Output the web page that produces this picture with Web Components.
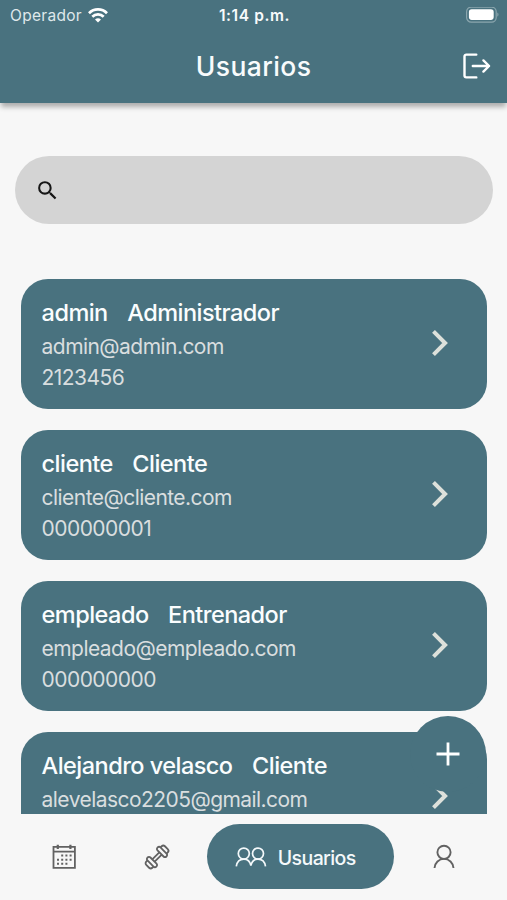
<!DOCTYPE html>
<html lang="es">
<head>
<meta charset="UTF-8">
<meta name="viewport" content="width=device-width, initial-scale=1.0">
<title>Usuarios</title>
<style>
  body {
    margin: 0;
    font-family: Inter, "Liberation Sans", sans-serif;
    background: #f7f7f7;
  }
</style>
</head>
<body>
<app-screen>
  <status-bar slot="top" operator="Operador" time="1:14 p.m."></status-bar>
  <app-header slot="top">Usuarios</app-header>
  <search-box></search-box>
  <user-list>
    <user-card name="admin" role-name="Administrador" email="admin@admin.com" phone="2123456"></user-card>
    <user-card name="cliente" role-name="Cliente" email="cliente@cliente.com" phone="000000001"></user-card>
    <user-card name="empleado" role-name="Entrenador" email="empleado@empleado.com" phone="000000000"></user-card>
    <user-card name="Alejandro velasco" role-name="Cliente" email="alevelasco2205@gmail.com"></user-card>
  </user-list>
  <add-button slot="floating"></add-button>
  <tab-bar slot="bottom"></tab-bar>
</app-screen>

<script>
class AppScreen extends HTMLElement {
  constructor() {
    super();
    this.attachShadow({ mode: "open" });
  }

  connectedCallback() {
    this.shadowRoot.innerHTML = `
      <style>
        :host {
            --teal: #49727f;
            display: flex;
            flex-direction: column;
            height: 900px;
            overflow: hidden;
        }
        /* la sombra de la cabecera queda por encima de la lista */
        header {
            flex: none;
            height: 103px;
            background: var(--teal);
            color: #f8fbfc;
            box-shadow: 0 5px 5px -1px rgba(0, 0, 0, 0.3);
            position: relative;
            z-index: 1;
        }
        main {
            flex: 1;
            min-height: 0;
            overflow: hidden;
            position: relative;
        }
        /* boton flotante sobre la lista */
        .floating {
            position: absolute;
            right: 21px;
            bottom: 21.5px;
        }
      </style>
      <header><slot name="top"></slot></header>
      <main>
        <slot></slot>
        <div class="floating"><slot name="floating"></slot></div>
      </main>
      <slot name="bottom"></slot>
    `;
  }
}
customElements.define("app-screen", AppScreen);

class StatusBar extends HTMLElement {
  constructor() {
    super();
    this.attachShadow({ mode: "open" });
  }

  connectedCallback() {
    this.shadowRoot.innerHTML = `
      <style>
        :host {
            display: grid;
            grid-template-columns: 1fr auto 1fr;
            align-items: center;
            height: 30px;
            padding: 0 8px 0 10px;
            font-size: 15.5px;
        }
        .left {
            display: flex;
            align-items: center;
            gap: 6px;
            color: #dfe8eb;
            letter-spacing: 0.3px;
        }
        .time {
            font-weight: 600;
            font-size: 15.5px;
            letter-spacing: 0.6px;
        }
        .battery {
            justify-self: end;
        }
        svg {
            display: block;
        }
      </style>
      <div class="left">
        <span>${this.getAttribute("operator")}</span>
        <svg width="20" height="15" viewBox="0 0 20 15" fill="none" stroke="#fff" stroke-width="2.7">
          <path d="M1 5.2a12.7 12.7 0 0 1 18 0"/>
          <path d="M4.3 8.7a8 8 0 0 1 11.4 0"/>
          <path d="M10 14.6L7 11.6a4.3 4.3 0 0 1 6 0z" fill="#fff" stroke="none"/>
        </svg>
      </div>
      <div class="time">${this.getAttribute("time")}</div>
      <svg class="battery" width="33" height="17" viewBox="0 0 33 17">
        <rect x="0.6" y="0.1" width="29.6" height="15" rx="4.6" fill="none" stroke="#8ba6ae" stroke-width="1.2"/>
        <rect x="2.9" y="2.3" width="24.8" height="10.6" rx="2.8" fill="#fff"/>
        <path d="M31.3 5.5c1.6.7 1.6 3.5 0 4.2z" fill="#8ba6ae"/>
      </svg>
    `;
  }
}
customElements.define("status-bar", StatusBar);

class AppHeader extends HTMLElement {
  constructor() {
    super();
    this.attachShadow({ mode: "open" });
  }

  connectedCallback() {
    this.shadowRoot.innerHTML = `
      <style>
        :host {
            display: grid;
            grid-template-columns: 1fr auto 1fr;
            align-items: center;
            height: 72px;
            padding: 0 15px;
        }
        h1 {
            grid-column: 2;
            margin: 0;
            padding-bottom: 1px;
            font-size: 26.5px;
            line-height: 32px;
            font-weight: 500;
            letter-spacing: 0.4px;
        }
        svg {
            justify-self: end;
        }
      </style>
      <h1><slot></slot></h1>
      <svg width="30" height="28" viewBox="0 0 30 28" fill="none" stroke="#fff" stroke-width="2.4" stroke-linecap="round" stroke-linejoin="round">
        <path d="M14.3 2.6H4.3a1.8 1.8 0 0 0-1.8 1.8v19.2a1.8 1.8 0 0 0 1.8 1.8h10"/>
        <path d="M10.8 14H27M21.4 8.4l5.7 5.6-5.7 5.6"/>
      </svg>
    `;
  }
}
customElements.define("app-header", AppHeader);

class SearchBox extends HTMLElement {
  constructor() {
    super();
    this.attachShadow({ mode: "open" });
  }

  connectedCallback() {
    this.shadowRoot.innerHTML = `
      <style>
        :host {
            display: flex;
            align-items: center;
            height: 68.5px;
            margin: 52.7px 13.6px 0 14.6px;
            padding: 1px 0 0 20px;
            box-sizing: border-box;
            border-radius: 35px;
            background: #d4d4d4;
        }
      </style>
      <svg width="25" height="25" viewBox="0 0 24 24" fill="#161616">
        <path d="M15.5 14h-.79l-.28-.27A6.47 6.47 0 0 0 16 9.5 6.5 6.5 0 1 0 9.5 16c1.61 0 3.09-.59 4.23-1.57l.27.28v.79l5 4.99L20.49 19l-4.99-5zm-6 0C7.01 14 5 11.99 5 9.5S7.01 5 9.5 5 14 7.01 14 9.5 11.99 14 9.5 14z"/>
      </svg>
    `;
  }
}
customElements.define("search-box", SearchBox);

class UserList extends HTMLElement {
  constructor() {
    super();
    this.attachShadow({ mode: "open" });
  }

  connectedCallback() {
    this.shadowRoot.innerHTML = `
      <style>
        :host {
            display: flex;
            flex-direction: column;
            gap: 20.5px;
            padding: 54.4px 20.5px 0 21.2px;
        }
      </style>
      <slot></slot>
    `;
  }
}
customElements.define("user-list", UserList);

class UserCard extends HTMLElement {
  constructor() {
    super();
    this.attachShadow({ mode: "open" });
  }

  connectedCallback() {
    this.shadowRoot.innerHTML = `
      <style>
        :host {
            display: flex;
            align-items: center;
            justify-content: space-between;
            height: 130.5px;
            box-sizing: border-box;
            padding: 0 36.5px 0 20.4px;
            border-radius: 27px;
            background: var(--teal);
        }
        .info {
            align-self: flex-start;
            padding-top: 18.2px;
            white-space: nowrap;
        }
        .title {
            display: flex;
            gap: 19.5px;
            font-size: 23.5px;
            line-height: 32px;
            font-weight: 500;
            letter-spacing: -0.53px;
            color: #fafdfe;
        }
        .line {
            font-size: 21px;
            line-height: 31px;
            letter-spacing: -0.55px;
            color: #d9dedf;
        }
        .title + .line {
            margin-top: 2px;
        }
        svg {
            margin-bottom: 1px;
        }
      </style>
      <div class="info">
        <div class="title">
          <span>${this.getAttribute("name")}</span>
          <span>${this.getAttribute("role-name")}</span>
        </div>
        <div class="line">${this.getAttribute("email")}</div>
        <div class="line">${this.getAttribute("phone") || ""}</div>
      </div>
      <svg width="20" height="30" viewBox="0 0 20 30" fill="none" stroke="#dde1db" stroke-width="4">
        <path d="M3.5 3.4L15.1 15 3.5 26.6"/>
      </svg>
    `;
  }
}
customElements.define("user-card", UserCard);

class AddButton extends HTMLElement {
  constructor() {
    super();
    this.attachShadow({ mode: "open" });
  }

  connectedCallback() {
    this.shadowRoot.innerHTML = `
      <style>
        :host {
            display: flex;
            align-items: center;
            justify-content: center;
            width: 76px;
            height: 76px;
            border-radius: 50%;
            background: var(--teal);
        }
      </style>
      <svg width="24" height="24" viewBox="0 0 24 24" stroke="#fff" stroke-width="2.8">
        <path d="M12 .5v23M.5 12h23"/>
      </svg>
    `;
  }
}
customElements.define("add-button", AddButton);

class TabBar extends HTMLElement {
  constructor() {
    super();
    this.attachShadow({ mode: "open" });
  }

  connectedCallback() {
    this.shadowRoot.innerHTML = `
      <style>
        :host {
            flex: none;
            display: flex;
            align-items: center;
            height: 86.5px;
            box-sizing: border-box;
            padding: 0 13px 0 17.5px;
            color: #626262;
        }
        .tab {
            flex: none;
            width: 93px;
            display: flex;
            justify-content: center;
        }
        .tab:last-child {
            flex: 1;
        }
        .tab.active {
            width: 186.5px;
            height: 65px;
            margin-left: 3.5px;
            box-sizing: border-box;
            padding-right: 10px;
            border-radius: 33px;
            background: var(--teal);
            color: #f4f9fb;
            align-items: center;
            gap: 11px;
            font-size: 19.5px;
            font-weight: 500;
            letter-spacing: -0.6px;
        }
        .active span {
            padding-top: 2px;
        }
        svg {
            display: block;
            fill: none;
            stroke: currentColor;
        }
      </style>
      <div class="tab">
        <svg width="24" height="26" viewBox="0 0 24 26" stroke-width="1.8">
          <path d="M1.5 2.9h21.4v21H1.500zM1.500 7.600h21.400"/>
          <path d="M5.8 .8V5M18.4 .8V5" stroke-width="2.2"/>
          <path d="M9.2 11.6h12M5 15.7h16M5 19.7h12" stroke-width="2" stroke-dasharray="2 2.2"/>
        </svg>
      </div>
      <div class="tab">
        <svg width="28" height="28" viewBox="-14 -14 28 28" stroke-width="1.8">
          <g transform="rotate(-45)">
            <path d="M-5 -1.7H5M-5 1.7H5"/>
            <rect x="-9.2" y="-6.3" width="4.2" height="12.6" rx="2"/>
            <path d="M-9.2 -4.3h-1.7a2.3 2.3 0 0 0-2.3 2.3v4a2.3 2.3 0 0 0 2.3 2.3h1.7"/>
            <rect x="5" y="-6.3" width="4.2" height="12.6" rx="2"/>
            <path d="M9.2 -4.3h1.7a2.3 2.3 0 0 1 2.3 2.3v4a2.3 2.3 0 0 1-2.3 2.3H9.2"/>
          </g>
        </svg>
      </div>
      <div class="tab active">
        <svg width="32" height="22" viewBox="0 0 32 22" stroke-width="1.7">
          <circle cx="8.8" cy="7.6" r="5.5"/>
          <circle cx="23" cy="7.6" r="5.5"/>
          <path d="M1.3 20.3c.7-4.5 3.6-7.2 7.5-7.2 3.6 0 6.3 2.5 7.1 6.6.8-4.1 3.5-6.6 7.1-6.6 3.9 0 6.8 2.7 7.5 7.2"/>
        </svg>
        <span>Usuarios</span>
      </div>
      <div class="tab">
        <svg width="22" height="25" viewBox="0 0 22 25" stroke-width="1.9">
          <circle cx="11" cy="8.3" r="6.6"/>
          <path d="M1.5 24c.4-5.3 4.4-9.1 9.5-9.1s9.1 3.8 9.5 9.1"/>
        </svg>
      </div>
    `;
  }
}
customElements.define("tab-bar", TabBar);
</script>
</body>
</html>
